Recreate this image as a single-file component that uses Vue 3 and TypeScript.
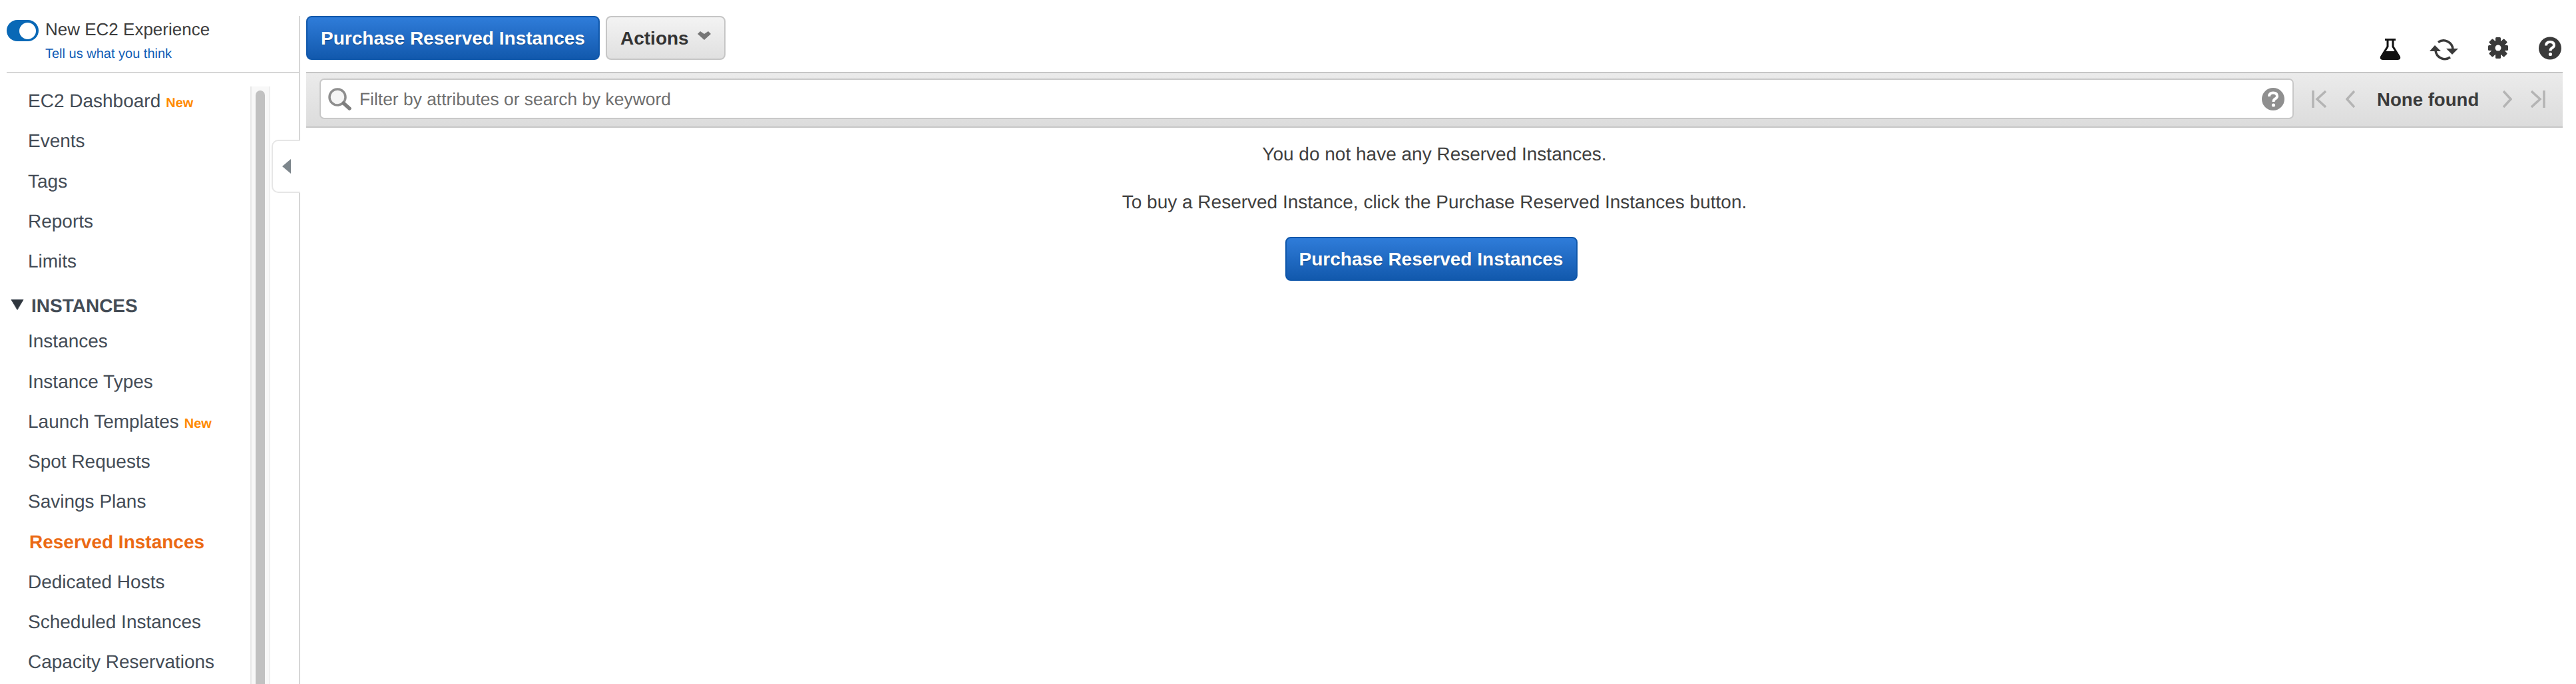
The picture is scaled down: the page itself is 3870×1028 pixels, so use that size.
<script setup lang="ts">
interface NavItem { label: string; isNew?: boolean; active?: boolean }
const topItems: NavItem[] = [
  { label: 'EC2 Dashboard', isNew: true },
  { label: 'Events' },
  { label: 'Tags' },
  { label: 'Reports' },
  { label: 'Limits' },
]
const instanceItems: NavItem[] = [
  { label: 'Instances' },
  { label: 'Instance Types' },
  { label: 'Launch Templates', isNew: true },
  { label: 'Spot Requests' },
  { label: 'Savings Plans' },
  { label: 'Reserved Instances', active: true },
  { label: 'Dedicated Hosts' },
  { label: 'Scheduled Instances' },
  { label: 'Capacity Reservations' },
]
</script>

<template>
  <div class="page">
    <aside class="sidebar">
      <div class="exp">
        <span class="toggle"><span class="knob"></span></span>
        <div class="exp-text">
          <div class="exp-title">New EC2 Experience</div>
          <a class="exp-link">Tell us what you think</a>
        </div>
      </div>
      <div class="nav-wrap">
        <nav class="nav">
          <div v-for="item in topItems" :key="item.label" class="nav-item">
            {{ item.label }}<span v-if="item.isNew" class="new">New</span>
          </div>
          <div class="nav-head">
            <svg class="tri" width="20" height="16" viewBox="0 0 20 16"><path d="M1 0.5H19L10 15.5Z" fill="#2f363d" stroke="#444c56" stroke-linejoin="round" /></svg>
            INSTANCES
          </div>
          <div v-for="item in instanceItems" :key="item.label" class="nav-item" :class="{ active: item.active }">
            {{ item.label }}<span v-if="item.isNew" class="new">New</span>
          </div>
        </nav>
        <div class="rail"><div class="thumb"></div></div>
      </div>
      <div class="collapse">
        <svg width="13" height="22" viewBox="0 0 13 22"><path d="M13 0V22L0 11Z" fill="#7d868c" /></svg>
      </div>
    </aside>

    <main class="main">
      <div class="toolbar">
        <button class="btn primary">Purchase Reserved Instances</button>
        <button class="btn actions">
          Actions
          <svg width="20" height="13" viewBox="0 0 20 13"><path d="M0 4L4 0L10 4L16 0L20 4L10 13Z" fill="#767676" /></svg>
        </button>
        <div class="tools">
          <svg class="flask" width="32" height="32" viewBox="0 0 32 32">
            <path d="M8 1.5H24" stroke="#111" stroke-width="3" fill="none" />
            <path d="M12 2V12L2.5 27.500Q1.500 30.500 4.500 30.500H27.500Q30.500 30.500 29.500 27.500L20 12V2" stroke="#111" stroke-width="3" fill="none" />
            <path d="M8.500 19H23.500L30 31H2Z" fill="#111" />
          </svg>
          <svg class="refresh" width="43" height="32" viewBox="0 0 43 32">
            <path d="M13 4.500A14 14 0 0 1 35 15" stroke="#3a3a3a" stroke-width="3.500" fill="none" />
            <path d="M9 17A14 14 0 0 0 31 27" stroke="#3a3a3a" stroke-width="3.500" fill="none" />
            <path d="M25 14H43L34 23Z" fill="#3a3a3a" />
            <path d="M0 18L8 9L17 18Z" fill="#3a3a3a" />
          </svg>
          <svg class="gear" width="30" height="32" viewBox="0 0 30 32">
            <g fill="#3a3a3a">
              <rect x="11" y="0" width="8" height="32" rx="1.500" />
              <rect x="11" y="0" width="8" height="32" rx="1.500" transform="rotate(45 15 16)" />
              <rect x="11" y="1" width="8" height="30" rx="1.500" transform="rotate(90 15 16)" />
              <rect x="11" y="0" width="8" height="32" rx="1.500" transform="rotate(135 15 16)" />
              <circle cx="15" cy="16" r="11" />
            </g>
            <circle cx="15" cy="16" r="4.500" fill="#fff" />
          </svg>
          <svg class="help" width="34" height="35" viewBox="0 0 34 34">
            <circle cx="17" cy="17" r="17" fill="#3a3a3a" />
            <path d="M11 13Q11 7.500 17 7.500Q23 7.500 23 12.500Q23 15 20 16.500Q17.500 18 17.500 21" stroke="#fff" stroke-width="4" fill="none" />
            <circle cx="17.500" cy="26" r="2.600" fill="#fff" />
          </svg>
        </div>
      </div>

      <div class="filter-bar">
        <div class="search">
          <svg class="glass" width="35" height="34" viewBox="0 0 35 34">
            <circle cx="14" cy="14" r="12" fill="#f5f5f5" stroke="#8e8e8e" stroke-width="3.500" />
            <path d="M23 23L32 31" stroke="#7e7e7e" stroke-width="5.500" stroke-linecap="round" />
          </svg>
          <span class="placeholder">Filter by attributes or search by keyword</span>
          <svg class="search-help" width="34" height="34" viewBox="0 0 34 34">
            <circle cx="17" cy="17" r="17" fill="#8f8f8f" />
            <path d="M11 13Q11 7.500 17 7.500Q23 7.500 23 12.500Q23 15 20 16.500Q17.500 18 17.500 21" stroke="#fff" stroke-width="4" fill="none" />
            <circle cx="17.500" cy="26" r="2.600" fill="#fff" />
          </svg>
        </div>
        <div class="pager">
          <svg class="pg first" width="22" height="26" viewBox="0 0 22 26"><path d="M2 0V26M21 1L8 13L21 25" /></svg>
          <svg class="pg prev" width="14" height="26" viewBox="0 0 14 26"><path d="M13 1L2 13L13 25" /></svg>
          <span class="found">None found</span>
          <svg class="pg next" width="14" height="26" viewBox="0 0 14 26"><path d="M1 1L12 13L1 25" /></svg>
          <svg class="pg last" width="22" height="26" viewBox="0 0 22 26"><path d="M20 0V26M1 1L14 13L1 25" /></svg>
        </div>
      </div>

      <section class="empty">
        <p class="line-one">You do not have any Reserved Instances.</p>
        <p class="line-two">To buy a Reserved Instance, click the Purchase Reserved Instances button.</p>
        <button class="btn primary">Purchase Reserved Instances</button>
      </section>
    </main>
  </div>
</template>

<style>
html, body { margin: 0; background: #fff; }
</style>

<style scoped>
.page {
  display: flex;
  height: 1028px;
  overflow: hidden;
  background: #fff;
  font-family: "Liberation Sans", Arial, sans-serif;
  text-rendering: geometricPrecision;
}
.sidebar {
  position: relative;
  box-sizing: border-box;
  flex: 0 0 451px;
  display: flex;
  flex-direction: column;
  margin-top: 24px;
  border-right: 2px solid #d6d6d6;
}
.exp {
  box-sizing: border-box;
  flex: 0 0 86px;
  display: flex;
  align-items: flex-start;
  gap: 10px;
  margin-left: 10px;
  padding-top: 4px;
  border-bottom: 2px solid #d6d6d6;
}
.toggle {
  box-sizing: border-box;
  display: flex;
  justify-content: flex-end;
  align-items: center;
  width: 48px;
  height: 32px;
  margin-top: 2px;
  padding-right: 4px;
  border-radius: 16px;
  background: #0968b6;
}
.knob { width: 25px; height: 25px; border-radius: 50%; background: #fff; }
.exp-title { font-size: 26px; line-height: 32px; color: #3d3d3d; }
.exp-link { display: block; margin-top: 8px; font-size: 20px; line-height: 26px; color: #0f5cb5; }
.nav-wrap { flex: 1; display: flex; min-height: 0; }
.nav { flex: 1; padding-top: 12px; overflow: hidden; }
.nav-item {
  height: 60.25px;
  padding-left: 42px;
  font-size: 28px;
  line-height: 60.25px;
  color: #444c56;
  white-space: nowrap;
}
.nav-item.active { padding-left: 44px; font-weight: 700; color: #eb6a14; }
.new { margin-left: 8px; font-size: 20px; font-weight: 700; color: #ff8a00; }
.nav-head {
  display: flex;
  align-items: center;
  gap: 11px;
  box-sizing: border-box;
  height: 60px;
  padding: 14px 0 0 16px;
  font-size: 28px;
  font-weight: 700;
  line-height: 46px;
  color: #444c56;
}
.tri { margin-top: -4px; }
.rail {
  box-sizing: border-box;
  flex: 0 0 30px;
  margin: 20px 43px 0 0;
  padding: 6px 6px 0;
  border-left: 2px solid #e8e8e8;
  border-right: 2px solid #eeeeee;
  background: #f8f8f8;
}
.thumb { height: 100%; border-radius: 8px 8px 0 0; background: #c1c1c1; }
.collapse {
  position: absolute;
  top: 186px;
  right: -2px;
  box-sizing: border-box;
  display: flex;
  align-items: center;
  width: 43px;
  height: 80px;
  padding-left: 14px;
  border: 2px solid #e6e6e6;
  border-right: 0;
  border-radius: 10px 0 0 10px;
  background: #fff;
}
.main {
  flex: 1;
  min-width: 0;
  display: flex;
  flex-direction: column;
  padding: 0 20px 0 9px;
}
.toolbar {
  display: flex;
  align-items: flex-start;
  gap: 9px;
  height: 66px;
  margin-top: 24px;
}
.btn {
  box-sizing: border-box;
  height: 66px;
  padding-top: 2px;
  border-radius: 8px;
  font-family: inherit;
  font-size: 28px;
  font-weight: 700;
  line-height: 1;
  cursor: pointer;
}
.primary {
  width: 441px;
  padding-right: 0;
  padding-left: 0;
  border: 2px solid #0f57aa;
  background: linear-gradient(#2f7cd9, #1259ad);
  color: #fff;
  text-shadow: 0 1px 1px rgba(0, 0, 0, 0.35);
}
.actions {
  display: flex;
  align-items: center;
  width: 180px;
  padding-right: 0;
  padding-left: 20px;
  border: 2px solid #c6c6c6;
  background: linear-gradient(#f3f3f3, #e0e0e0);
  color: #333;
}
.actions svg { margin: -8px 0 0 13px; }
.tools { display: flex; margin-left: auto; padding-right: 2px; }
.tools svg { flex: none; }
.flask { margin-top: 34px; }
.refresh { margin: 35px 0 0 43px; }
.gear { margin: 32px 0 0 45px; }
.help { margin: 31px 0 0 46px; }
.filter-bar {
  box-sizing: border-box;
  display: flex;
  align-items: flex-start;
  height: 84px;
  margin-top: 18px;
  padding: 8px 0 0 20px;
  border-top: 2px solid #c6c6c6;
  border-bottom: 2px solid #c6c6c6;
  background: linear-gradient(#ebebeb, #dcdcdc);
}
.search {
  box-sizing: border-box;
  flex: 0 0 2966px;
  display: flex;
  align-items: center;
  height: 61px;
  padding: 0 12px 0 11px;
  border: 2px solid #c8c8c8;
  border-radius: 7px;
  background: #fff;
}
.placeholder { margin: 1px 0 0 12px; font-size: 26.4px; color: #6f6f6f; }
.search-help { margin-left: auto; }
.pager { display: flex; align-items: center; height: 61px; padding-left: 27px; }
.pg { flex: none; }
.pg path { fill: none; stroke: #b4b4b4; stroke-width: 3.500; }
.prev { margin-left: 29px; }
.found { margin: 2px 35px 0 33px; width: 154px; font-size: 27.6px; font-weight: 700; color: #3a3a3a; white-space: nowrap; }
.last { margin-left: 28px; }
.empty { display: flex; flex-direction: column; align-items: center; padding-top: 20px; }
.empty p { margin: 0; font-size: 28px; line-height: 40px; color: #3f3f3f; }
.empty .line-two { margin-top: 32px; }
.empty .btn { width: 439px; margin: 32px 10px 0 0; }
</style>
